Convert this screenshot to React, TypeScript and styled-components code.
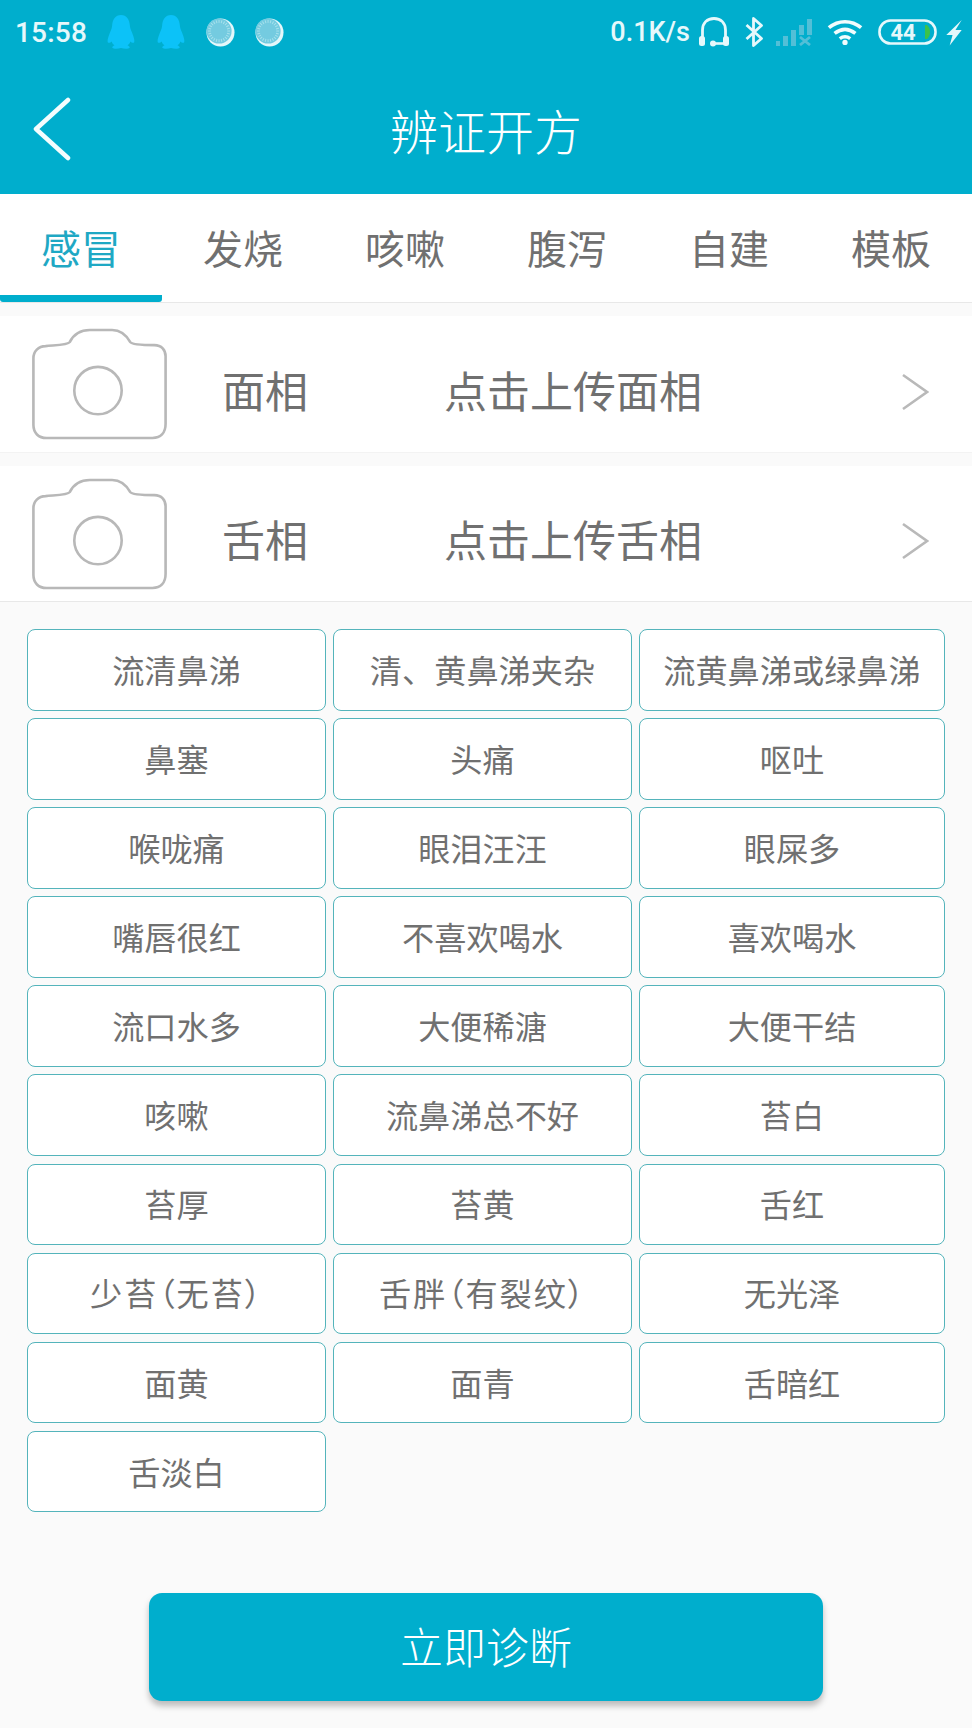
import { useState } from "react";
import styled, { createGlobalStyle } from "styled-components";

const GlobalStyle = createGlobalStyle`
  html, body {
    margin: 0;
    padding: 0;
    background: #fafafa;
  }
  * {
    box-sizing: border-box;
  }
`;

const cjk = `"Noto Sans CJK SC", "Noto Sans", sans-serif`;
const teal = "#00aecd";
const textGrey = "#707070";

const Page = styled.div`
  width: 972px;
  height: 1728px;
  overflow: hidden;
  background: #fafafa;
  font-family: ${cjk};
`;

const Header = styled.header`
  height: 194px;
  background: ${teal};
  color: #fff;
`;

const StatusBar = styled.div`
  height: 60px;
  padding: 4px 10px 0 15px;
  display: flex;
  align-items: center;
  justify-content: space-between;
`;

const StatusGroup = styled.div`
  display: flex;
  align-items: center;
`;

const StatusText = styled.span`
  font-family: Roboto, "Liberation Sans", sans-serif;
  font-size: 27px;
  font-weight: 500;
  color: #e6f8fb;
`;

const TimeText = styled(StatusText)`
  width: 72px;
  margin-right: 20px;
  font-size: 28px;
  letter-spacing: 0.2px;
  white-space: nowrap;
`;

const SpeedText = styled(StatusText)`
  margin-right: 8px;
`;

const StatusIcon = styled.svg<{ $gap?: number }>`
  display: block;
  flex: none;
  margin-right: ${(p) => p.$gap ?? 0}px;
`;

const NavBar = styled.div`
  height: 134px;
  padding: 4px 33px 0 33px;
  display: grid;
  grid-template-columns: 1fr auto 1fr;
  align-items: center;
`;

const Title = styled.h1`
  margin: 0;
  font-size: 48px;
  font-weight: 300;
  line-height: 1;
`;

const TabBar = styled.nav`
  display: flex;
  height: 109px;
  background: #fff;
  border-bottom: 1px solid #e8e8e8;
`;

const Tab = styled.button<{ $active?: boolean }>`
  width: 162px;
  padding: 5px 0 0;
  border: 0;
  border-bottom: 7px solid ${(p) => (p.$active ? teal : "transparent")};
  border-radius: 0 0 3px 3px;
  background: none;
  font-family: inherit;
  font-size: 40px;
  font-weight: 400;
  color: ${(p) => (p.$active ? "#1fa8c4" : textGrey)};
`;

const UploadRow = styled.div<{ $last?: boolean }>`
  margin-top: 13px;
  height: ${(p) => (p.$last ? 136 : 137)}px;
  padding: 0 43px 0 31px;
  display: flex;
  align-items: center;
  background: #fff;
  border-bottom: 1px solid ${(p) => (p.$last ? "#e8e8e8" : "#f3f3f3")};
  font-size: 43px;
  color: ${textGrey};
`;

const RowLabel = styled.span`
  width: 222px;
  margin-left: 54px;
  padding-top: 9px;
`;

const RowValue = styled.span`
  flex: 1;
  padding-top: 9px;
`;

const ChipGrid = styled.div`
  padding: 27px 0 0 27px;
  display: grid;
  grid-template-columns: 299px 299px 306px;
  grid-auto-rows: 81.500px;
  gap: 7.600px 7px;
`;

const Chip = styled.button<{ $tight?: boolean }>`
  padding: 0 0 2px;
  border: 1px solid #54b4bb;
  border-radius: 8px;
  background: #fff;
  font-family: inherit;
  font-size: 32.200px;
  font-feature-settings: ${(p) => (p.$tight ? `"palt"` : "normal")};
  letter-spacing: ${(p) => (p.$tight ? "2px" : "0")};
  color: ${textGrey};
`;

const Diagnose = styled.button`
  display: block;
  width: 674px;
  height: 108px;
  margin: 80.600px auto 0;
  padding: 0 0 4px;
  border: 0;
  border-radius: 13px;
  background: ${teal};
  box-shadow: 0 5px 6px rgba(0, 0, 0, 0.25);
  font-family: inherit;
  font-size: 43px;
  font-weight: 300;
  color: #fff;
`;

const tabs = ["感冒", "发烧", "咳嗽", "腹泻", "自建", "模板"];

const symptoms = [
  "流清鼻涕", "清、黄鼻涕夹杂", "流黄鼻涕或绿鼻涕",
  "鼻塞", "头痛", "呕吐",
  "喉咙痛", "眼泪汪汪", "眼屎多",
  "嘴唇很红", "不喜欢喝水", "喜欢喝水",
  "流口水多", "大便稀溏", "大便干结",
  "咳嗽", "流鼻涕总不好", "苔白",
  "苔厚", "苔黄", "舌红",
  "少苔（无苔）", "舌胖（有裂纹）", "无光泽",
  "面黄", "面青", "舌暗红",
  "舌淡白",
];

function Penguin({ gap }: { gap: number }) {
  return (
    <StatusIcon $gap={gap} width="28" height="34" viewBox="0 0 30 36" preserveAspectRatio="none">
      <path
        fill="#0cc2f8"
        d="M15 0c6 0 9 5 9.500 11 .2 3 1 4 2.500 8 1.500 4 3 8 2 10-1 1-3 0-4-1-.5 2-1.500 3-3 4 2 1 3 2 2 3-1 1-6 1-9 0-3 1-8 1-9 0-1-1 0-2 2-3-1.500-1-2.500-2-3-4-1 1-3 2-4 1-1-2 .5-6 2-10 1.500-4 2.300-5 2.500-8C6 5 9 0 15 0z"
      />
    </StatusIcon>
  );
}

function Spinner({ gap }: { gap: number }) {
  const ticks = Array.from({ length: 24 }, (_, i) => (i * 360) / 24);
  return (
    <StatusIcon $gap={gap} width="29" height="29" viewBox="0 0 30 30">
      <circle cx="15" cy="15" r="14.500" fill="#e4f7fa" />
      <circle cx="13.500" cy="13.500" r="13" fill="#74cbe0" />
      {ticks.map((a) => (
        <line
          key={a}
          x1="13.500"
          y1="2"
          x2="13.500"
          y2="5"
          stroke="#a8e1ec"
          strokeWidth="1"
          transform={`rotate(${a} 13.500 13.500)`}
        />
      ))}
    </StatusIcon>
  );
}

function Headset() {
  return (
    <StatusIcon $gap={15} width="32" height="30" viewBox="0 0 32 30">
      <path d="M4.500 21V13C4.500 6 9 1.500 16 1.500S27.500 6 27.500 13v8" fill="none" stroke="#e6f8fb" strokeWidth="2.800" />
      <rect x="1" y="19" width="6" height="10" rx="2.500" fill="#e6f8fb" />
      <rect x="25" y="19" width="6" height="10" rx="2.500" fill="#e6f8fb" />
      <path d="M16 26.500h10" fill="none" stroke="#e6f8fb" strokeWidth="2.600" />
      <circle cx="15" cy="26.500" r="3" fill="#e6f8fb" />
    </StatusIcon>
  );
}

function Bluetooth() {
  return (
    <StatusIcon $gap={13} width="18" height="30" viewBox="0 0 18 30">
      <path d="M1.500 8l15 13.500L8.500 28.500V1.500l8 7L1.500 22" fill="none" stroke="#e6f8fb" strokeWidth="2.800" strokeLinejoin="round" />
    </StatusIcon>
  );
}

function Signal() {
  return (
    <StatusIcon $gap={15} width="36" height="28" viewBox="0 0 36 28">
      <g fill="#52bfd7">
        <rect x="0" y="23" width="4" height="5" />
        <rect x="7" y="18" width="5" height="10" />
        <rect x="15" y="12" width="5" height="16" />
        <rect x="23" y="7" width="5" height="10" />
        <rect x="31" y="1" width="5" height="16" />
      </g>
      <path d="M24 19l10 8m0-8l-10 8" stroke="#52bfd7" strokeWidth="2.800" />
    </StatusIcon>
  );
}

function Wifi() {
  return (
    <StatusIcon $gap={15} width="36" height="28" viewBox="0 0 38 28">
      <g fill="none" stroke="#f2fcfd" strokeWidth="3.800">
        <path d="M2 9.500c10-8.500 24-8.500 34 0" />
        <path d="M8 15.500c7-5.500 15-5.500 22 0" />
        <path d="M13.500 21c3.500-2.500 7.500-2.500 11 0" />
      </g>
      <circle cx="19" cy="25" r="2.800" fill="#f2fcfd" />
    </StatusIcon>
  );
}

function Battery() {
  return (
    <StatusIcon $gap={9} width="59" height="26" viewBox="0 0 59 26">
      <rect x="1.500" y="1.500" width="56" height="23" rx="11" fill="none" stroke="#e6f8fb" strokeWidth="2.600" />
      <path d="M47 6h2c2 1.800 3 4 3 7s-1 5.200-3 7h-2z" fill="#3cc24a" />
      <text x="25" y="21" textAnchor="middle" fontFamily="Roboto, sans-serif" fontWeight="700" fontSize="22" fill="#e6f8fb">
        44
      </text>
    </StatusIcon>
  );
}

function Bolt() {
  return (
    <StatusIcon width="16" height="27" viewBox="0 0 16 28">
      <path d="M16 1L0 16.500h6.500L3.500 27.500 16 11.500H9.500z" fill="#e6f8fb" />
    </StatusIcon>
  );
}

const CameraIcon = styled.svg`
  flex: none;
`;

function Camera() {
  return (
    <CameraIcon width="137" height="112" viewBox="0 0 135 111" fill="none" stroke="#b8b8b8" strokeWidth="2.600">
      <path d="M14 18c10-1 22-1 24-4 4-8 11-12 20-12h22c9 0 14 5 18 12 2 3 16 3 24 3 7 0 11 5 11 11v67c0 9-5 14-13 14H15c-8 0-13-5-13-13V30c0-7 5-12 12-12z" />
      <circle cx="66" cy="62" r="23.500" />
    </CameraIcon>
  );
}

const ChevronIcon = styled.svg`
  flex: none;
  margin-top: 15px;
`;

function Chevron() {
  return (
    <ChevronIcon width="28" height="38" viewBox="0 0 28 38" fill="none" stroke="#b9b9b9" strokeWidth="2.600">
      <path d="M2 2l24 17L2 36" />
    </ChevronIcon>
  );
}

function BackArrow() {
  return (
    <svg width="38" height="64" viewBox="0 0 38 64" fill="none" stroke="#f4fdfe" strokeWidth="4.500" strokeLinecap="round" strokeLinejoin="round">
      <path d="M35 3L3 32l32 29" />
    </svg>
  );
}

export default function App() {
  const [active, setActive] = useState(0);
  return (
    <Page>
      <GlobalStyle />
      <Header>
        <StatusBar>
          <StatusGroup>
            <TimeText>15:58</TimeText>
            <Penguin gap={22} />
            <Penguin gap={21} />
            <Spinner gap={20} />
            <Spinner gap={0} />
          </StatusGroup>
          <StatusGroup>
            <SpeedText>0.1K/s</SpeedText>
            <Headset />
            <Bluetooth />
            <Signal />
            <Wifi />
            <Battery />
            <Bolt />
          </StatusGroup>
        </StatusBar>
        <NavBar>
          <BackArrow />
          <Title>辨证开方</Title>
        </NavBar>
      </Header>
      <TabBar>
        {tabs.map((t, i) => (
          <Tab key={t} $active={i === active} onClick={() => setActive(i)}>
            {t}
          </Tab>
        ))}
      </TabBar>
      <UploadRow>
        <Camera />
        <RowLabel>面相</RowLabel>
        <RowValue>点击上传面相</RowValue>
        <Chevron />
      </UploadRow>
      <UploadRow $last>
        <Camera />
        <RowLabel>舌相</RowLabel>
        <RowValue>点击上传舌相</RowValue>
        <Chevron />
      </UploadRow>
      <ChipGrid>
        {symptoms.map((s) => (
          <Chip key={s} $tight={s.includes("（")}>
            {s}
          </Chip>
        ))}
      </ChipGrid>
      <Diagnose>立即诊断</Diagnose>
    </Page>
  );
}
